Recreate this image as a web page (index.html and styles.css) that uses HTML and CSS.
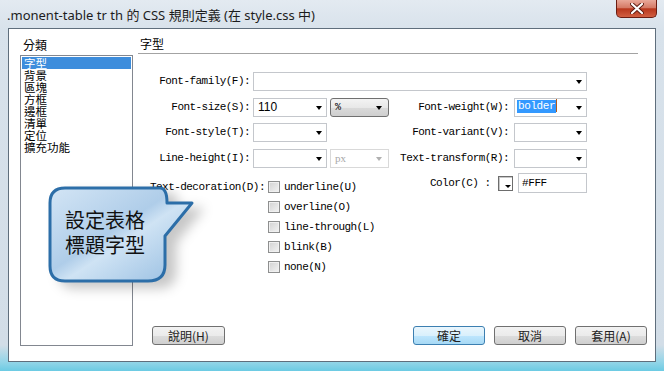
FILE: index.html
```html
<!DOCTYPE html>
<html lang="zh-Hant">
<head>
<meta charset="UTF-8">
<title>CSS 規則定義</title>
<link rel="stylesheet" href="styles.css">
</head>
<body>

<div class="window">
  <div class="titlebar">
    <span class="title">.monent-table tr th 的 CSS 規則定義 (在 style.css 中)</span>
    <span class="close-btn">
      <svg width="14" height="11" viewBox="0 0 14 11">
        <path d="M2 1 L12 10 M12 1 L2 10" stroke="#5a1a10" stroke-width="4" stroke-linecap="round"/>
        <path d="M2 1 L12 10 M12 1 L2 10" stroke="#fff" stroke-width="2.2" stroke-linecap="round"/>
      </svg>
    </span>
  </div>

  <div class="frame-body">
    <div class="client">
      <div class="category">
        <div class="cat-label">分類</div>
        <ul class="cat-list">
          <li class="selected">字型</li>
          <li>背景</li>
          <li>區塊</li>
          <li>方框</li>
          <li>邊框</li>
          <li>清單</li>
          <li>定位</li>
          <li>擴充功能</li>
        </ul>
      </div>

      <div class="panel">
        <div class="panel-head">字型</div>

        <div class="form-grid">
          <div class="lbl">Font-family(F):</div>
          <div class="combo wide"></div>

          <div class="lbl">Font-size(S):</div>
          <div class="pair">
            <div class="combo small"><span class="num">110</span></div>
            <div class="combo unit btn-combo">%</div>
          </div>
          <div class="lbl r">Font-weight(W):</div>
          <div class="combo"><span class="sel">bolder</span><span class="caret"></span></div>

          <div class="lbl">Font-style(T):</div>
          <div class="pair">
            <div class="combo small"></div>
          </div>
          <div class="lbl r">Font-variant(V):</div>
          <div class="combo"></div>

          <div class="lbl">Line-height(I):</div>
          <div class="pair">
            <div class="combo small"></div>
            <div class="combo unit disabled">px</div>
          </div>
          <div class="lbl r">Text-transform(R):</div>
          <div class="combo"></div>
        </div>

        <div class="deco-row">
          <div class="deco">
            <div class="deco-label">Text-decoration(D):</div>
            <div class="checks">
              <label class="check-row"><span class="check"></span>underline(U)</label>
              <label class="check-row"><span class="check"></span>overline(O)</label>
              <label class="check-row"><span class="check"></span>line-through(L)</label>
              <label class="check-row"><span class="check"></span>blink(B)</label>
              <label class="check-row"><span class="check"></span>none(N)</label>
            </div>
          </div>
          <div class="color-group">
            <span class="color-label">Color(C) :</span>
            <span class="swatch"></span>
            <span class="text-input">#FFF</span>
          </div>
        </div>

        <div class="buttons">
          <button class="btn help">說明(H)</button>
          <button class="btn default">確定</button>
          <button class="btn">取消</button>
          <button class="btn">套用(A)</button>
        </div>
      </div>
    </div>
  </div>

  <div class="callout">
    <svg width="170" height="115" viewBox="0 0 170 115">
      <defs>
        <linearGradient id="bubbleFill" x1="0" y1="0" x2="1" y2="1">
          <stop offset="0" stop-color="#d3e5f5"/>
          <stop offset="0.45" stop-color="#afcde9"/>
          <stop offset="0.55" stop-color="#cfe3f4"/>
          <stop offset="1" stop-color="#93bbe0"/>
        </linearGradient>
      </defs>
      <path d="M25 8 H120 Q127 8 127 23 L152 23 L125 56 V85 Q125 101 108 101 H25 Q10 101 10 86 V23 Q10 8 25 8 Z"
            fill="url(#bubbleFill)" stroke="#2c6ea8" stroke-width="3" stroke-linejoin="round"/>
    </svg>
    <div class="callout-text">設定表格<br>標題字型</div>
  </div>
</div>

</body>
</html>
```

FILE: styles.css
```css
* { box-sizing: border-box; }
body {
  margin: 0;
  width: 664px;
  height: 371px;
  overflow: hidden;
  font-family: "Liberation Mono", "Noto Sans CJK TC", monospace;
  font-size: 11px;
  color: #000;
  background: #d9e3ec;
}
.window {
  position: relative;
  height: 371px;
  display: flex;
  flex-direction: column;
  background: linear-gradient(to bottom, #e3eaf1 0, #d8e2eb 30px, #d2dde7 345px, #93d5e8 362px, #6ccbe3 371px);
}

/* title bar */
.titlebar {
  height: 28px;
  flex: none;
  display: flex;
  justify-content: space-between;
  padding-left: 7px;
}
.title {
  font-family: "Noto Sans", "Noto Sans CJK TC", sans-serif;
  font-size: 13px;
  line-height: 30px;
  color: #1c1c1c;
}
.close-btn {
  width: 41px;
  height: 18px;
  margin-right: 7px;
  display: flex;
  align-items: center;
  justify-content: center;
  border: 1px solid #6b1d12;
  border-top: none;
  border-radius: 0 0 5px 5px;
  background: linear-gradient(#e9a899, #d57a66 45%, #b8371d 52%, #d15f42 100%);
}

/* client area */
.frame-body {
  flex: 1;
  display: flex;
  padding: 0 8px 9px 8px;
}
.client {
  flex: 1;
  display: flex;
  background: #fff;
  border: 1px solid #5f6e7c;
}

.category {
  width: 124px;
  flex: none;
  padding: 9px 0 0 11px;
}
.cat-label,
.panel-head {
  font-family: "Noto Sans CJK TC", sans-serif;
  font-size: 12px;
  line-height: 14px;
}
.cat-label { padding-left: 3px; }
.cat-list {
  list-style: none;
  margin: 3px 0 0;
  padding: 1px;
  height: 291px;
  border: 1px solid #828790;
  font-family: "Noto Sans CJK TC", sans-serif;
  font-size: 11.5px;
}
.cat-list li {
  line-height: 12px;
  height: 12px;
  padding-left: 2px;
}
.cat-list li.selected {
  background: #3d8ddc;
  color: #fff;
}

.panel {
  flex: 1;
  display: flex;
  flex-direction: column;
  margin-left: 5px;
  padding: 8px 8px 16px 0;
}
.panel-head {
  margin-right: 9px;
  padding: 0 0 2px 2px;
  border-bottom: 1px solid #a3a3a3;
}

/* form */
.form-grid {
  display: grid;
  grid-template-columns: 115px 136px 125px 73px;
  grid-auto-rows: 19px;
  row-gap: 6.5px;
  margin-top: 18px;
}
.lbl,
.deco-label,
.color-label,
.check-row {
  white-space: nowrap;
  letter-spacing: -0.55px;
}
.lbl {
  text-align: right;
  padding-right: 3px;
  line-height: 19px;
}
.lbl.r { padding-right: 5px; }
.pair {
  display: flex;
  gap: 3px;
}
.combo {
  position: relative;
  height: 19px;
  border: 1px solid #c4c7cc;
  background: #fff;
  padding-left: 2px;
  line-height: 17px;
}
.combo::after {
  content: "";
  position: absolute;
  right: 4px;
  top: 7px;
  border-left: 3.5px solid transparent;
  border-right: 3.5px solid transparent;
  border-top: 4px solid #000;
}
.combo.wide { grid-column: 2 / 5; }
.combo.small { width: 74px; }
.combo.unit { width: 59px; }
.btn-combo {
  border-color: #707070;
  border-radius: 3px;
  background: linear-gradient(#f3f3f3, #e8e8e8 50%, #dadada 51%, #cfcfcf);
  padding-left: 4px;
  font-size: 10px;
}
.btn-combo::after { right: 6px; }
.combo.disabled {
  border-color: #d9d9d9;
  color: #a8a8a8;
  font-family: "Liberation Serif", serif;
  font-size: 11px;
  padding-left: 4px;
}
.combo.disabled::after { border-top-color: #b0b0b0; right: 6px; }
.num {
  font-family: "Liberation Sans", sans-serif;
  font-size: 12px;
  padding-left: 2px;
}
.sel {
  display: inline-block;
  background: #3399ff;
  color: #fff;
  line-height: 13px;
  letter-spacing: -0.4px;
  padding: 0 1px;
  vertical-align: 1px;
}
.caret {
  display: inline-block;
  width: 1px;
  height: 13px;
  background: #b25a1a;
  vertical-align: -2px;
}

/* text decoration + color */
.deco-row {
  display: flex;
  align-items: flex-start;
  margin-top: 9.5px;
}
.deco {
  width: 280px;
  display: flex;
  margin-left: 12px;
}
.deco-label {
  width: 118px;
  line-height: 20px;
}
.checks {
  display: flex;
  flex-direction: column;
}
.check-row {
  height: 20px;
  display: flex;
  align-items: center;
}
.check {
  width: 12px;
  height: 12px;
  margin-right: 4px;
  border: 1px solid #8e8f8f;
  background: linear-gradient(135deg, #d2d2d2, #f3f3f3);
  box-shadow: inset 0 0 0 1px #f0f0f0;
}
.color-group {
  display: flex;
  align-items: center;
  margin-top: -4px;
  height: 20px;
}
.color-label { width: 68px; }
.swatch {
  position: relative;
  width: 15px;
  height: 15px;
  margin-right: 5px;
  border: 1px solid #6d6d6d;
  background: #fff;
  box-shadow: inset 1px 1px 0 #c8c8c8;
}
.swatch::after {
  content: "";
  position: absolute;
  right: 1px;
  bottom: 2px;
  border-left: 3px solid transparent;
  border-right: 3px solid transparent;
  border-top: 3px solid #000;
}
.text-input {
  width: 69px;
  height: 20px;
  border: 1px solid #c4c7cc;
  padding-left: 3px;
  line-height: 18px;
  letter-spacing: -0.4px;
}

/* buttons */
.buttons {
  margin-top: auto;
  display: flex;
  gap: 9px;
}
.btn {
  width: 72px;
  height: 19px;
  padding: 0;
  border: 1px solid #707070;
  border-radius: 3px;
  background: linear-gradient(#f2f2f2, #ebebeb 50%, #dddddd 51%, #cfcfcf);
  font-family: "Noto Sans CJK TC", sans-serif;
  font-size: 12px;
  line-height: 16px;
  color: #222;
}
.btn.help {
  width: 73px;
  margin-left: 14px;
  margin-right: auto;
}
.btn.default {
  border-color: #3c7fb1;
  background: linear-gradient(#eaf6fd, #d9f0fc 50%, #bee6fd 51%, #a7d9f5);
}

/* callout bubble */
.callout {
  position: absolute;
  left: 40px;
  top: 180px;
  width: 170px;
  height: 115px;
}
.callout svg {
  display: block;
  filter: drop-shadow(10px 6px 6px rgba(0, 0, 0, 0.22));
}
.callout-text {
  position: absolute;
  left: 25px;
  top: 27px;
  font-family: "Noto Sans CJK TC", sans-serif;
  font-size: 20px;
  line-height: 25px;
  color: #111;
}
```
